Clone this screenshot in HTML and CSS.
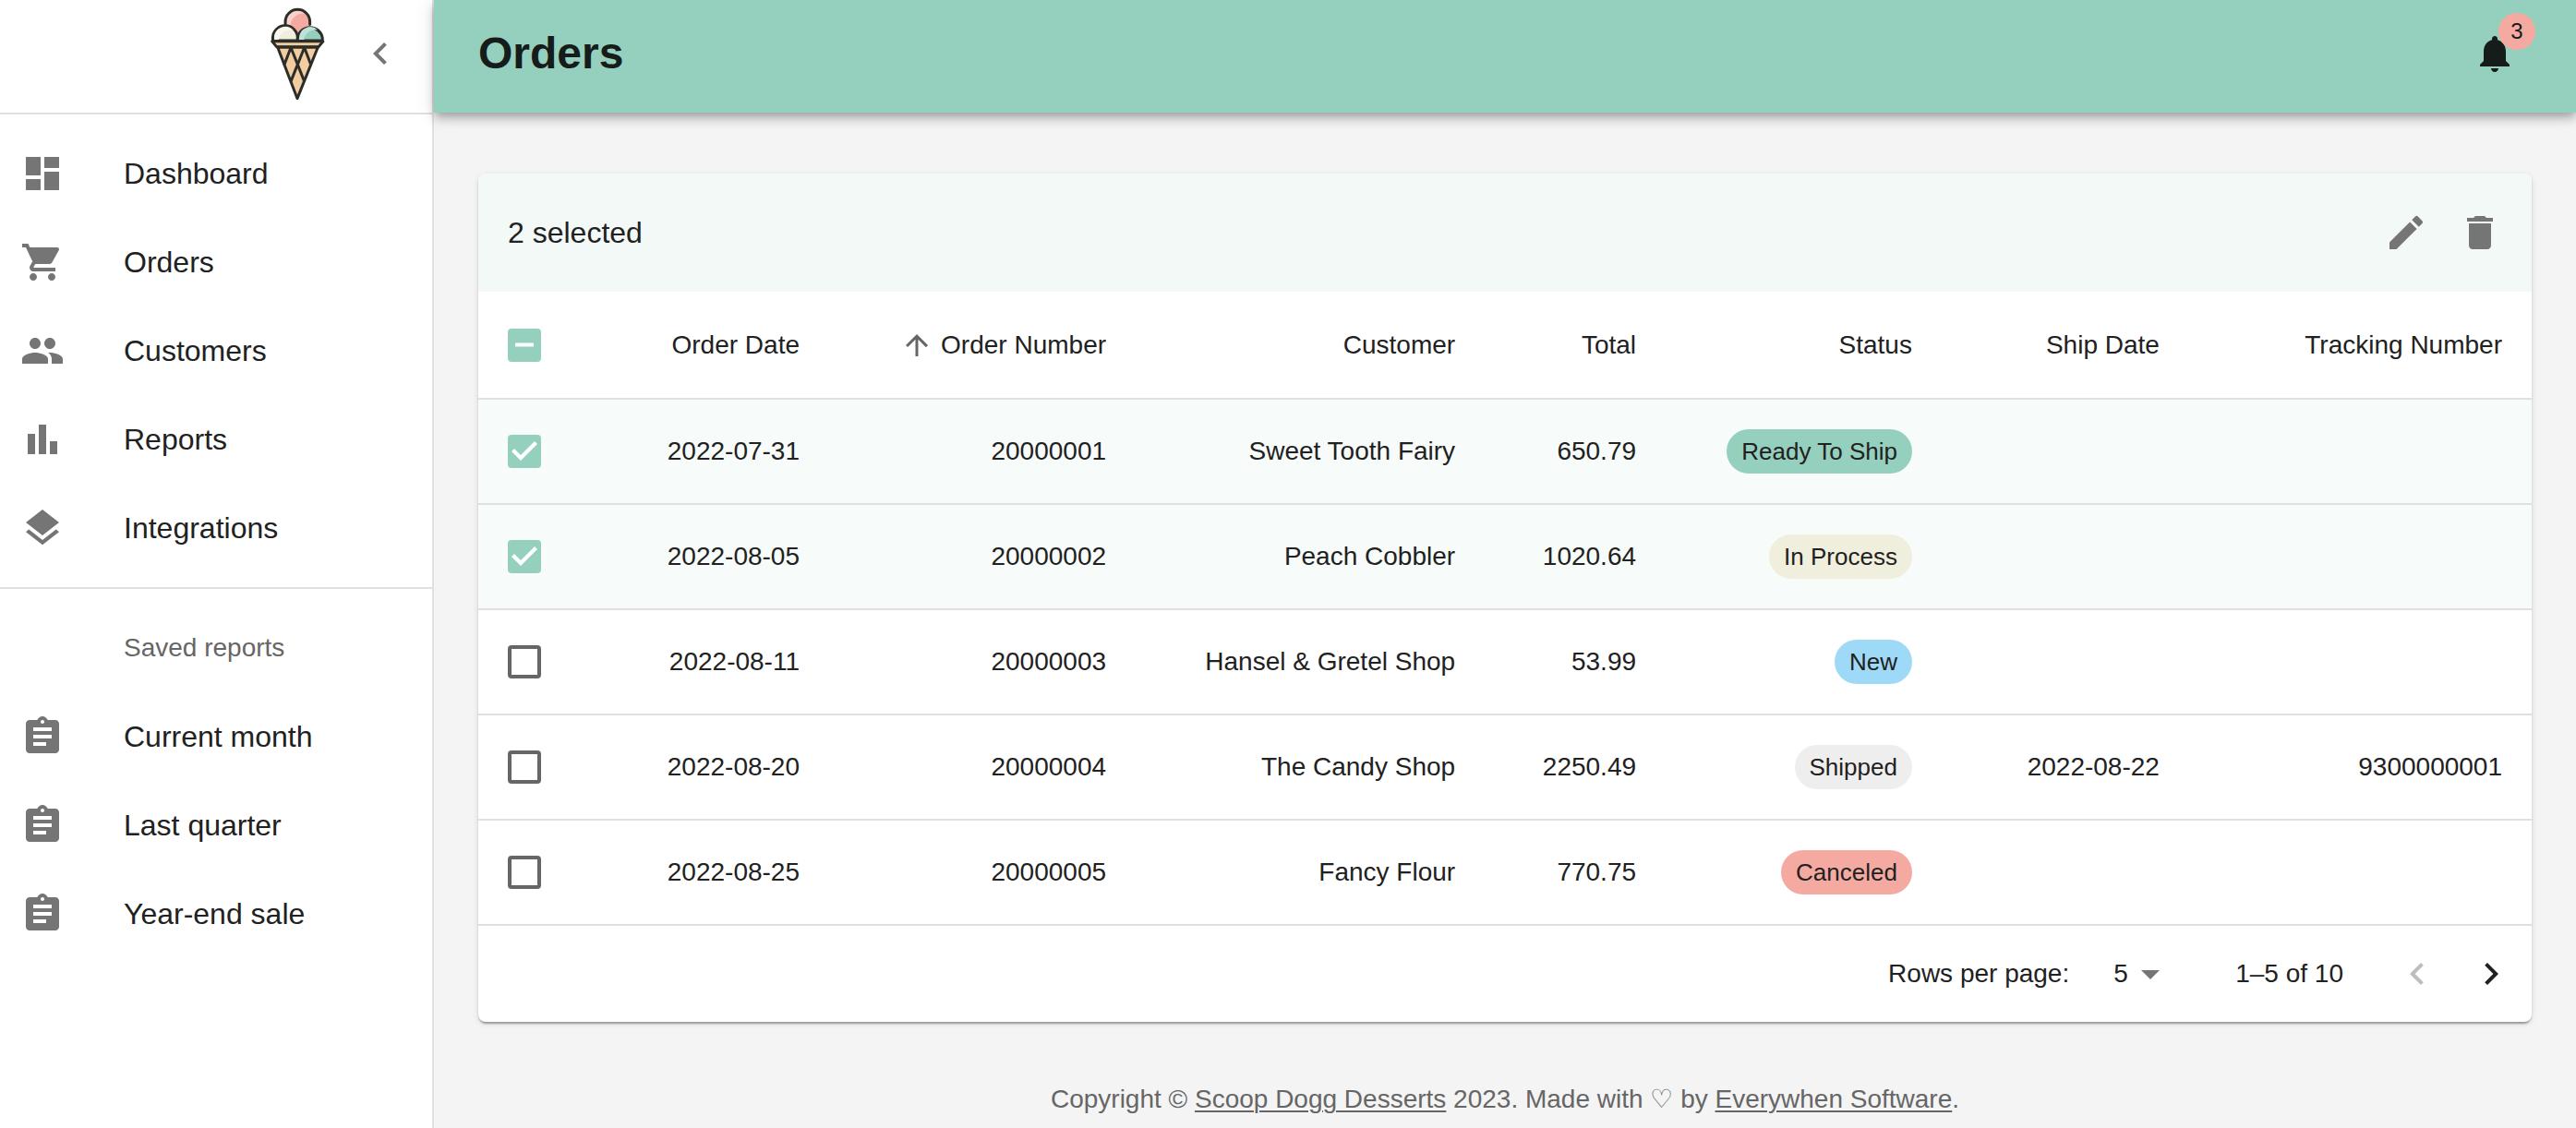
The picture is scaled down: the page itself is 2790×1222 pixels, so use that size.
FILE: index.html
```html
<!DOCTYPE html>
<html lang="en">
<head>
<meta charset="utf-8">
<meta name="viewport" content="width=device-width, initial-scale=1">
<title>Orders</title>
<link rel="stylesheet" href="styles.css">
</head>
<body>
<svg class="sprite" aria-hidden="true">
  <symbol id="i-report" viewBox="0 0 24 24"><path d="M19 3h-4.18C14.4 1.84 13.3 1 12 1c-1.3 0-2.4.84-2.82 2H5c-1.1 0-2 .9-2 2v14c0 1.1.9 2 2 2h14c1.1 0 2-.9 2-2V5c0-1.1-.9-2-2-2zm-7 0c.55 0 1 .45 1 1s-.45 1-1 1-1-.45-1-1 .45-1 1-1zm2 14H7v-2h7v2zm3-4H7v-2h10v2zm0-4H7V7h10v2z"/></symbol>
</svg>
<div class="layout">
  <aside class="sidebar">
    <div class="brand">
      <svg class="logo" viewBox="68 22 177 304" role="img" aria-label="Scoop Dogg Desserts">
        <g stroke="#2b2e28" stroke-width="9" stroke-linejoin="round" stroke-linecap="round">
          <circle cx="156" cy="69" r="40" fill="#f4aaa1" stroke="none"/>
          <path d="M134 90A40 40 0 0 1 188 45A40 40 0 0 0 118 80Z" fill="#f9d2ce" stroke="none"/>
          <path d="M116 78V69a40 40 0 0 1 80 0v9" fill="none"/>
          <path d="M75 130v-8a40 40 0 0 1 81 0v8z" fill="#f0eedd"/>
          <path d="M80 127v-6a36 36 0 0 1 62-25c-26-3-44 8-48 31z" fill="#f8f7f0" stroke="none"/>
          <path d="M156 130v-8a41 41 0 0 1 81 0v8z" fill="#95cfbd"/>
          <path d="M161 127v-6a36 36 0 0 1 60-26c-24-1-40 10-44 32z" fill="#bfe2d8" stroke="none"/>
          <path d="M73 133h166l-15 18H88z" fill="#f3cc9f"/>
          <path d="M91 152h131L155 319z" fill="#f3cc9f"/>
          <path d="M134 153l-21 55M134 153l43 108M178 153l-43 108M178 153l21 55" fill="none"/>
        </g>
      </svg>
      <button class="icon-button collapse" type="button" aria-label="Collapse menu">
        <svg class="icon" viewBox="0 0 24 24"><path d="M15.41 7.41L14 6l-6 6 6 6 1.41-1.41L10.83 12z"/></svg>
      </button>
    </div>
    <nav aria-label="Main">
      <ul class="menu">
        <li><a href="#dashboard"><svg class="icon" viewBox="0 0 24 24"><path d="M3 13h8V3H3v10zm0 8h8v-6H3v6zm10 0h8V11h-8v10zm0-18v6h8V3h-8z"/></svg>Dashboard</a></li>
        <li><a href="#orders"><svg class="icon" viewBox="0 0 24 24"><path d="M7 18c-1.1 0-1.99.9-1.99 2S5.9 22 7 22s2-.9 2-2-.9-2-2-2zM1 2v2h2l3.6 7.59-1.35 2.45c-.16.28-.25.61-.25.96 0 1.1.9 2 2 2h12v-2H7.42c-.14 0-.25-.11-.25-.25l.03-.12.9-1.63h7.45c.75 0 1.41-.41 1.75-1.03l3.58-6.49c.08-.14.12-.31.12-.48 0-.55-.45-1-1-1H5.21l-.94-2H1zm16 16c-1.1 0-1.99.9-1.99 2s.89 2 1.99 2 2-.9 2-2-.9-2-2-2z"/></svg>Orders</a></li>
        <li><a href="#customers"><svg class="icon" viewBox="0 0 24 24"><path d="M16 11c1.66 0 2.99-1.34 2.99-3S17.66 5 16 5c-1.66 0-3 1.34-3 3s1.34 3 3 3zm-8 0c1.66 0 2.99-1.34 2.99-3S9.66 5 8 5C6.34 5 5 6.34 5 8s1.34 3 3 3zm0 2c-2.33 0-7 1.17-7 3.5V19h14v-2.5c0-2.33-4.67-3.5-7-3.5zm8 0c-.29 0-.62.02-.97.05 1.16.84 1.97 1.97 1.97 3.45V19h6v-2.5c0-2.33-4.67-3.5-7-3.5z"/></svg>Customers</a></li>
        <li><a href="#reports"><svg class="icon" viewBox="0 0 24 24"><path d="M4 9h4v11H4zm12 4h4v7h-4zm-6-9h4v16h-4z"/></svg>Reports</a></li>
        <li><a href="#integrations"><svg class="icon" viewBox="0 0 24 24"><path d="M11.99 18.54l-7.37-5.73L3 14.07l9 7 9-7-1.63-1.27-7.38 5.74zM12 16l7.36-5.73L21 9l-9-7-9 7 1.63 1.27L12 16z"/></svg>Integrations</a></li>
      </ul>
      <h2 class="menu-heading">Saved reports</h2>
      <ul class="menu saved">
        <li><a href="#current-month"><svg class="icon"><use href="#i-report"/></svg>Current month</a></li>
        <li><a href="#last-quarter"><svg class="icon"><use href="#i-report"/></svg>Last quarter</a></li>
        <li><a href="#year-end-sale"><svg class="icon"><use href="#i-report"/></svg>Year-end sale</a></li>
      </ul>
    </nav>
  </aside>
  <div class="content">
    <header class="topbar">
      <h1>Orders</h1>
      <button class="icon-button alerts" type="button" aria-label="3 notifications">
        <svg class="icon" viewBox="0 0 24 24"><path d="M12 22c1.1 0 2-.9 2-2h-4c0 1.1.89 2 2 2zm6-6v-5c0-3.07-1.64-5.64-4.5-6.32V4c0-.83-.67-1.5-1.5-1.5s-1.5.67-1.5 1.5v.68C7.63 5.36 6 7.92 6 11v5l-2 2v1h16v-1l-2-2z"/></svg>
        <span class="badge">3</span>
      </button>
    </header>
    <main>
      <section class="card">
        <div class="selection">
          <p>2 selected</p>
          <button class="icon-button" type="button" aria-label="Edit"><svg class="icon" viewBox="0 0 24 24"><path d="M3 17.25V21h3.75L17.81 9.94l-3.75-3.75L3 17.25zM20.71 7.04c.39-.39.39-1.02 0-1.41l-2.34-2.34a.996.996 0 0 0-1.41 0l-1.83 1.83 3.75 3.75 1.83-1.83z"/></svg></button>
          <button class="icon-button" type="button" aria-label="Delete"><svg class="icon" viewBox="0 0 24 24"><path d="M6 19c0 1.1.9 2 2 2h8c1.1 0 2-.9 2-2V7H6v12zM19 4h-3.5l-1-1h-5l-1 1H5v2h14V4z"/></svg></button>
        </div>
        <table>
          <colgroup>
            <col class="c-check"><col class="c-date"><col class="c-number"><col class="c-customer"><col class="c-total"><col class="c-status"><col class="c-ship"><col>
          </colgroup>
          <thead>
            <tr>
              <th class="check"><input type="checkbox" class="partial" aria-checked="mixed" aria-label="Select all orders"></th>
              <th><button class="sort" type="button">Order Date</button></th>
              <th aria-sort="ascending"><button class="sort" type="button"><svg class="arrow" viewBox="0 0 24 24"><path d="M4 12l1.41 1.41L11 7.83V20h2V7.83l5.58 5.59L20 12l-8-8-8 8z"/></svg>Order Number</button></th>
              <th><button class="sort" type="button">Customer</button></th>
              <th><button class="sort" type="button">Total</button></th>
              <th><button class="sort" type="button">Status</button></th>
              <th><button class="sort" type="button">Ship Date</button></th>
              <th><button class="sort" type="button">Tracking Number</button></th>
            </tr>
          </thead>
          <tbody>
            <tr class="selected"><td class="check"><input type="checkbox" checked aria-label="Select order 20000001"></td><td>2022-07-31</td><td>20000001</td><td>Sweet Tooth Fairy</td><td>650.79</td><td><span class="chip ready">Ready To Ship</span></td><td></td><td></td></tr>
            <tr class="selected"><td class="check"><input type="checkbox" checked aria-label="Select order 20000002"></td><td>2022-08-05</td><td>20000002</td><td>Peach Cobbler</td><td>1020.64</td><td><span class="chip process">In Process</span></td><td></td><td></td></tr>
            <tr><td class="check"><input type="checkbox" aria-label="Select order 20000003"></td><td>2022-08-11</td><td>20000003</td><td>Hansel &amp; Gretel Shop</td><td>53.99</td><td><span class="chip new">New</span></td><td></td><td></td></tr>
            <tr><td class="check"><input type="checkbox" aria-label="Select order 20000004"></td><td>2022-08-20</td><td>20000004</td><td>The Candy Shop</td><td>2250.49</td><td><span class="chip shipped">Shipped</span></td><td>2022-08-22</td><td>9300000001</td></tr>
            <tr><td class="check"><input type="checkbox" aria-label="Select order 20000005"></td><td>2022-08-25</td><td>20000005</td><td>Fancy Flour</td><td>770.75</td><td><span class="chip canceled">Canceled</span></td><td></td><td></td></tr>
          </tbody>
        </table>
        <div class="pagination">
          <label for="rows">Rows per page:</label>
          <div class="select">
            <select id="rows"><option>5</option><option>10</option><option>25</option></select>
            <svg class="icon" viewBox="0 0 24 24"><path d="M7 10l5 5 5-5z"/></svg>
          </div>
          <span class="range">1–5 of 10</span>
          <button class="icon-button" type="button" disabled aria-label="Previous page"><svg class="icon" viewBox="0 0 24 24"><path d="M15.41 16.59L10.83 12l4.58-4.59L14 6l-6 6 6 6 1.41-1.41z"/></svg></button>
          <button class="icon-button next" type="button" aria-label="Next page"><svg class="icon" viewBox="0 0 24 24"><path d="M8.59 16.59L13.17 12 8.59 7.41 10 6l6 6-6 6-1.41-1.41z"/></svg></button>
        </div>
      </section>
    </main>
    <footer>Copyright © <a href="#scoop-dogg">Scoop Dogg Desserts</a> 2023. Made with ♡ by <a href="#everywhen">Everywhen Software</a>.</footer>
  </div>
</div>
</body>
</html>
```
FILE: styles.css
```css
:root {
  --primary: #95cfbd;
  --text: #212121;
  --muted: #666;
  --icon: #757575;
  --line: #e0e0e0;
}

* { box-sizing: border-box; }

body {
  margin: 0;
  background: #f4f4f4;
  color: var(--text);
  font-family: "Liberation Sans", Helvetica, Arial, sans-serif;
  font-size: 28px;
  line-height: 40px;
}

.sprite { display: none; }
h1, h2, p, ul { margin: 0; padding: 0; }
ul { list-style: none; }
button, select { font: inherit; color: inherit; }

.icon {
  width: 48px;
  height: 48px;
  flex: none;
  display: block;
  fill: var(--icon);
}

.icon-button {
  display: flex;
  padding: 16px;
  border: 0;
  border-radius: 50%;
  background: none;
  cursor: pointer;
}

.layout {
  display: flex;
  min-height: 100vh;
}

/* Sidebar */
.sidebar {
  flex: none;
  width: 470px;
  border-right: 2px solid var(--line);
  background: #fff;
}

.brand {
  display: flex;
  align-items: center;
  justify-content: flex-end;
  gap: 20px;
  height: 124px;
  padding: 0 16px 6px 0;
  border-bottom: 2px solid var(--line);
}

.logo {
  width: 59px;
  height: 101px;
}

.menu { padding: 16px 0; }

.menu a {
  display: flex;
  align-items: center;
  gap: 64px;
  height: 96px;
  padding-left: 22px;
  color: inherit;
  font-size: 32px;
  text-decoration: none;
}

.menu-heading {
  padding: 16px 0 0 134px;
  border-top: 2px solid var(--line);
  color: var(--muted);
  font-size: 28px;
  font-weight: 400;
  line-height: 96px;
}

.menu.saved { padding-top: 0; }

/* Top bar */
.content {
  flex: 1;
  min-width: 0;
}

.topbar {
  position: relative;
  display: flex;
  align-items: center;
  justify-content: space-between;
  height: 122px;
  padding: 0 48px 6px;
  background: var(--primary);
  color: #151c1a;
  box-shadow: 0 4px 8px -2px rgba(0, 0, 0, .2), 0 8px 10px rgba(0, 0, 0, .14), 0 2px 20px rgba(0, 0, 0, .12);
}

.topbar h1 {
  font-size: 48px;
  line-height: 64px;
}

.alerts { position: relative; }
.alerts .icon { fill: #151c1a; }

.badge {
  position: absolute;
  top: -4px;
  right: -4px;
  width: 40px;
  height: 40px;
  border-radius: 50%;
  background: #f4aaa1;
  font-size: 24px;
  line-height: 40px;
  text-align: center;
}

/* Orders card */
main { padding: 66px 48px 0; }

.card {
  border-radius: 8px;
  background: #fff;
  box-shadow: 0 4px 2px -2px rgba(0, 0, 0, .2), 0 2px 2px rgba(0, 0, 0, .14), 0 2px 6px rgba(0, 0, 0, .12);
}

.selection {
  display: flex;
  align-items: center;
  height: 128px;
  padding: 0 16px 0 32px;
  border-radius: 8px 8px 0 0;
  background: #f3f9f7;
  font-size: 32px;
}

.selection p { flex: 1; }

table {
  width: 100%;
  table-layout: fixed;
  border-collapse: separate;
  border-spacing: 0;
}

.c-check { width: 92px; }
.c-date { width: 12.95%; }
.c-number { width: 14.93%; }
.c-customer { width: 17%; }
.c-total { width: 8.81%; }
.c-status { width: 13.44%; }
.c-ship { width: 12.05%; }

th, td {
  height: 114px;
  padding: 0 32px;
  border-bottom: 2px solid var(--line);
  font-weight: 400;
  text-align: right;
  white-space: nowrap;
}

th { height: 117px; }
.check { padding-right: 0; text-align: left; }
.selected { background: #f7fbfa; }

.sort {
  display: inline-flex;
  align-items: center;
  gap: 8px;
  padding: 0;
  border: 0;
  background: none;
  vertical-align: middle;
  cursor: pointer;
}

.arrow {
  width: 36px;
  height: 36px;
  fill: var(--muted);
}

input[type="checkbox"] {
  display: block;
  appearance: none;
  width: 36px;
  height: 36px;
  margin: 0;
  border: 4px solid var(--muted);
  border-radius: 4px;
}

input[type="checkbox"]:checked, input[type="checkbox"].partial {
  border: 0;
  background: var(--primary);
}

input:checked::before, input.partial::before {
  content: "";
  display: block;
  width: 36px;
  height: 36px;
  background: #fff;
  clip-path: polygon(14px 28px, 4px 18px, 7px 15px, 14px 22px, 29px 7px, 32px 10px);
}

input.partial::before { clip-path: inset(16px 8px); }

.chip {
  display: inline-block;
  padding: 0 16px;
  border-radius: 24px;
  font-size: 26px;
  line-height: 48px;
  vertical-align: middle;
}

.ready { background: var(--primary); }
.process { background: #f0eedc; }
.new { background: #9edaf7; }
.shipped { background: #eee; }
.canceled { background: #f4aaa1; }

/* Pagination */
.pagination {
  display: flex;
  align-items: center;
  justify-content: flex-end;
  height: 104px;
  padding-right: 4px;
}

.select {
  position: relative;
  width: 64px;
  margin: 0 68px 0 48px;
}

.select select {
  display: block;
  appearance: none;
  width: 100%;
  height: 48px;
  padding: 0;
  border: 0;
  background: none;
}

.select .icon {
  position: absolute;
  top: 0;
  right: 0;
  pointer-events: none;
}

.range { margin-right: 40px; }
.icon-button:disabled .icon { fill: #bdbdbd; }
.next .icon { fill: var(--text); }

footer {
  padding: 64px 48px 12px;
  color: var(--muted);
  text-align: center;
}

footer a {
  color: inherit;
  text-decoration-thickness: 2px;
  text-underline-offset: 3px;
}
```
